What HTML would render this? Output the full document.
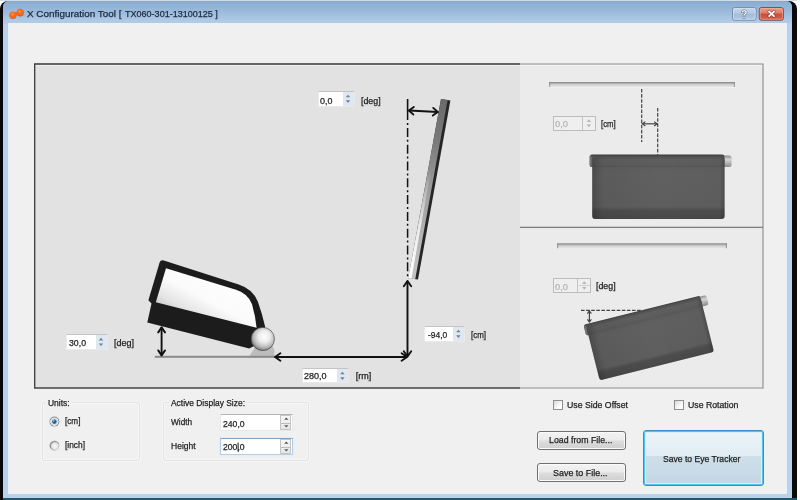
<!DOCTYPE html>
<html><head><meta charset="utf-8"><title>X Configuration Tool</title>
<style>
*{box-sizing:border-box;margin:0;padding:0}
html,body{width:800px;height:500px;overflow:hidden;background:#fff}
body{position:relative;font-family:"Liberation Sans",sans-serif;font-size:10px;color:#222}
.abs{position:absolute}
#dark{left:0;top:1px;width:797px;height:499px;background:#0a0a0c;border-radius:8px 8px 0 0}
#teal{left:3px;top:498px;width:794px;height:2px;background:#1d5a6e}
#frame{left:3px;top:1px;width:789px;height:497px;background:#b9d1ea;border-radius:6px 6px 0 0;overflow:hidden}
#titlebar{left:0;top:0;width:789px;height:24px;background:linear-gradient(#8da6c2 0,#8aadd2 1.4px,#8fb2d6 4px,#9ebcdc 50%,#adc9e5 80%,#b4cbe4 92%,#bccfe4 100%)}
#client{left:9px;top:24px;width:777px;height:468.5px;background:#f0f0f0;box-shadow:0 0 0 1px #eaf2f8}
#topstrip{left:0;top:0;width:797px;height:1.2px;background:#d2dde8}
.lbl{filter:blur(0.3px);-webkit-text-stroke:0.25px currentColor;position:absolute;white-space:nowrap;line-height:12px;transform-origin:0 0}
.spin{position:absolute;background:#fff;border:1px solid #e9e9e9;border-top-color:#c4c4c4}
.spin i{position:absolute;right:0;top:0;bottom:0;width:11px;background:#dfe7f1}
.spin.dis{background:#efefef;border:1px solid #bcbcbc}
.spin.dis i{background:#efefef;border-left:1px solid #c4c4c4}
.spin.big{border:1px solid #e9e9e9;border-top-color:#b4b4b4}
.spin.big i{width:11.5px;background:linear-gradient(#f6f6f6,#e6e6e6);border:1px solid #c4c4c4;top:0;bottom:0;right:0.5px}
.spin.big i:after{content:"";position:absolute;left:0;right:0;top:7px;height:1px;background:#bdbdbd}
.spin.foc{border:1px solid #b0d0ec;border-top-color:#7fa3c4;box-shadow:0 0 0 1px #e2eef9}
.btn.bigb{border:1px solid #3c8fc4;border-radius:3px;background:linear-gradient(#edf4f8,#e0ecf3 46%,#cfdfe9 47%,#c2d7e4);box-shadow:inset 0 0 0 1px #4cc4ee,inset 0 0 0 2px #d8eef8}
.gb{position:absolute;border:1px solid #e1e1e1;border-radius:3px;box-shadow:inset 0 0 0 1px #f7f7f7,0 0 0 1px #f6f6f6}
.btn,.cb,.spin,.gb{filter:blur(0.3px)}
.btn{position:absolute;border:1px solid #707070;border-radius:3px;background:linear-gradient(#f3f3f3,#ebebeb 48%,#dddddd 52%,#cfcfcf);box-shadow:inset 0 0 0 1px #fafafa}
.cb{position:absolute;width:10px;height:10px;border:1px solid #8e8f8f;background:linear-gradient(135deg,#d8d8d8,#fff 70%)}
</style></head><body>
<div class="abs" id="topstrip"></div>
<div class="abs" id="dark"></div>
<div class="abs" id="teal"></div>
<div class="abs" id="frame"><div class="abs" id="titlebar"></div></div>
<div class="abs" id="client"></div>
<svg class="abs" style="left:0;top:0;filter:blur(0.35px)" width="800" height="26" viewBox="0 0 800 26">
<defs>
<linearGradient id="gclose" x1="0" y1="0" x2="0" y2="1"><stop offset="0" stop-color="#e9a08e"/><stop offset="0.45" stop-color="#dc7a64"/><stop offset="0.5" stop-color="#cd4a33"/><stop offset="1" stop-color="#d4694f"/></linearGradient>
<linearGradient id="ghelp" x1="0" y1="0" x2="0" y2="1"><stop offset="0" stop-color="#c4d6ea"/><stop offset="0.45" stop-color="#b4cae3"/><stop offset="0.5" stop-color="#a2bcd9"/><stop offset="1" stop-color="#b4cbe4"/></linearGradient>
</defs>
<!-- app icon -->
<g fill="#a8481a" opacity="0.75"><circle cx="13" cy="15.6" r="3.5"/><circle cx="20.3" cy="12.9" r="3.5"/></g>
<g fill="#f26a20">
 <circle cx="12.9" cy="14.9" r="3.4"/><circle cx="20.2" cy="12.2" r="3.4"/>
 <path d="M13 13 L19 10.8 L20.5 14.4 L14.5 16.6Z"/>
</g>
<circle cx="12.4" cy="14" r="1.5" fill="#ff9246" opacity="0.8"/><circle cx="19.8" cy="11.3" r="1.5" fill="#ff9246" opacity="0.8"/>
<!-- help / close -->
<rect x="732.5" y="7.6" width="23.6" height="12.6" rx="2" fill="url(#ghelp)" stroke="#6d85a4" stroke-width="0.9"/>
<rect x="733.4" y="8.5" width="21.8" height="10.8" rx="1.4" fill="none" stroke="#e4edf7" stroke-width="0.7" opacity="0.8"/>
<rect x="759.3" y="7.6" width="24" height="12.6" rx="2" fill="url(#gclose)" stroke="#7a3a3a" stroke-width="0.9"/>
<rect x="760.2" y="8.5" width="22.2" height="10.8" rx="1.4" fill="none" stroke="#f3c0b4" stroke-width="0.7" opacity="0.8"/>
<g stroke="#5a2a2a" stroke-width="3.1" stroke-linecap="square" opacity="0.55"><path d="M769.2 11.7 L774 16.1 M774 11.7 L769.2 16.1"/></g>
<g stroke="#fff" stroke-width="1.8" stroke-linecap="square"><path d="M769.2 11.7 L774 16.1 M774 11.7 L769.2 16.1"/></g>
<text x="744.3" y="17.8" font-family="Liberation Sans, sans-serif" font-weight="bold" font-size="10.5" text-anchor="middle" fill="#eef3f9" stroke="#4f6482" stroke-width="1" paint-order="stroke">?</text>
</svg>

<svg class="abs" style="left:0;top:0;filter:blur(0.35px)" width="800" height="500" viewBox="0 0 800 500">
<defs>
<linearGradient id="gwin" x1="0.8" y1="0.05" x2="0.12" y2="0.8"><stop offset="0" stop-color="#ffffff"/><stop offset="0.55" stop-color="#fbfbfb"/><stop offset="0.8" stop-color="#e4e4e4"/><stop offset="1" stop-color="#bcbcbc"/></linearGradient>
<radialGradient id="gball" cx="0.56" cy="0.4" r="0.62"><stop offset="0" stop-color="#ffffff"/><stop offset="0.4" stop-color="#ececec"/><stop offset="0.75" stop-color="#b8b8b8"/><stop offset="1" stop-color="#6e6e6e"/></radialGradient>
<linearGradient id="gmon" x1="0" y1="0" x2="1" y2="0"><stop offset="0" stop-color="#ffffff"/><stop offset="0.35" stop-color="#d8d8d8"/><stop offset="0.7" stop-color="#9a9a9a"/><stop offset="0.8" stop-color="#222"/><stop offset="1" stop-color="#111"/></linearGradient>
<linearGradient id="gmonfade" x1="0" y1="0" x2="0" y2="1"><stop offset="0" stop-color="#5a5a5a" stop-opacity="1"/><stop offset="0.35" stop-color="#6c6c6c" stop-opacity="0.85"/><stop offset="0.75" stop-color="#8a8a8a" stop-opacity="0.15"/><stop offset="1" stop-color="#8a8a8a" stop-opacity="0"/></linearGradient>
<linearGradient id="gbar" x1="0" y1="0" x2="0" y2="1"><stop offset="0" stop-color="#858585"/><stop offset="0.22" stop-color="#a8a8a8"/><stop offset="0.45" stop-color="#d2d2d2"/><stop offset="0.8" stop-color="#e2e2e2"/><stop offset="1" stop-color="#f6f6f6"/></linearGradient>
<linearGradient id="groll" x1="0" y1="0" x2="0" y2="1"><stop offset="0" stop-color="#3c3c3c"/><stop offset="0.14" stop-color="#4e4e4e"/><stop offset="0.4" stop-color="#5f5f5f"/><stop offset="0.85" stop-color="#5c5c5c"/><stop offset="1" stop-color="#565656"/></linearGradient>
<linearGradient id="gknob" x1="0" y1="0" x2="0" y2="1"><stop offset="0" stop-color="#909090"/><stop offset="0.35" stop-color="#d4d4d4"/><stop offset="1" stop-color="#8a8a8a"/></linearGradient>
<linearGradient id="gbody" x1="0" y1="0" x2="0" y2="1"><stop offset="0" stop-color="#5a5a5a"/><stop offset="0.25" stop-color="#606060"/><stop offset="0.8" stop-color="#5e5e5e"/><stop offset="0.86" stop-color="#4e4e4e"/><stop offset="1" stop-color="#484848"/></linearGradient><linearGradient id="gside" x1="0" y1="0" x2="1" y2="0"><stop offset="0" stop-color="#000" stop-opacity="0.22"/><stop offset="0.08" stop-color="#000" stop-opacity="0.05"/><stop offset="0.5" stop-color="#000" stop-opacity="0"/><stop offset="0.96" stop-color="#000" stop-opacity="0.02"/><stop offset="1" stop-color="#000" stop-opacity="0.2"/></linearGradient>
<linearGradient id="gmonv" gradientUnits="userSpaceOnUse" x1="0" y1="99" x2="0" y2="279"><stop offset="0" stop-color="#6a6a6a"/><stop offset="0.25" stop-color="#7c7c7c"/><stop offset="0.5" stop-color="#9c9c9c"/><stop offset="0.75" stop-color="#b4b4b4"/><stop offset="1" stop-color="#c4c4c4"/></linearGradient><linearGradient id="gmonhl" gradientUnits="userSpaceOnUse" x1="0" y1="170" x2="0" y2="279"><stop offset="0" stop-color="#fff" stop-opacity="0"/><stop offset="0.5" stop-color="#fff" stop-opacity="0.7"/><stop offset="1" stop-color="#fff" stop-opacity="1"/></linearGradient>
<g id="dev">
 <rect x="0" y="1" width="142" height="11.5" rx="2.5" fill="url(#gknob)"/>
 <rect x="2.6" y="3" width="132.4" height="61.5" rx="3" fill="url(#gbody)"/>
 <rect x="0" y="0" width="135" height="12.5" rx="2.5" fill="url(#groll)"/>
 <rect x="0.3" y="1" width="1.6" height="10.5" rx="0.8" fill="#8a8a8a" opacity="0.55"/>
 <rect x="2.6" y="3" width="132.4" height="61.5" rx="3" fill="url(#gside)"/>
</g>
</defs>
<!-- panel backgrounds -->
<rect x="34" y="63.5" width="486" height="324.5" fill="#e2e2e2"/>
<rect x="520" y="63.5" width="243.5" height="324.5" fill="#ebebeb"/>
<!-- light inner line under top border -->
<rect x="35" y="64.6" width="728" height="1.2" fill="#f6f6f6" opacity="0.9"/>
<!-- borders -->
<path d="M520 64 H34.7 V388" fill="none" stroke="#3a3a3a" stroke-width="1.3"/><path d="M34 388 H520" fill="none" stroke="#444" stroke-width="1.6"/>
<path d="M520 64 H763 V388 H520" fill="none" stroke="#8c8c8c" stroke-width="1.1"/>
<path d="M520 227.3 H763" stroke="#7c7c7c" stroke-width="1.2"/>

<!-- side-view eye tracker -->
<path d="M248.5 357.5 L254 349 L262 339 L272 344 L274.3 350 L274.3 357.5 Z" fill="#bcbcbc"/>
<rect x="154.7" y="355.8" width="120" height="2" fill="#8a8a8a"/>
<path d="M159.6 262.6 Q160.6 259.4 163.8 260.4 L238.7 284.4 Q253 289 257.8 301.5 Q262 313 265.2 327 L256 345 L249.2 348.6 L147.3 322.4 L151.5 303.5 L148.4 300.3 Z" fill="#1c1c1c"/>
<path d="M166 268.2 L236 289.8 Q248 293.6 252 304.2 Q255.2 315 256.6 327.7 L155.8 302.2 Z" fill="url(#gwin)"/>
<circle cx="262.8" cy="339" r="11.6" fill="url(#gball)" stroke="#4a4a4a" stroke-width="0.7"/>

<!-- monitor -->
<path d="M441 99 L450.4 100.4 L418 279.6 L408.3 278.3 Z" fill="#262626"/>
<path d="M441 99 L447.6 100 L415.2 279.2 L408.3 278.3 Z" fill="url(#gmonv)"/>
<path d="M428.4 170 L431 170.4 L411.4 278.8 L408.3 278.3 Z" fill="url(#gmonhl)"/>

<!-- dash-dot line -->
<path d="M407.6 99 V111.5" stroke="#111" stroke-width="1.6"/>
<path d="M407.6 111.1 V278.5" stroke="#111" stroke-width="1.5" stroke-dasharray="9 2.9 2 2.9"/>

<!-- arrows -->
<g stroke="#111" stroke-width="1.9" fill="none" stroke-linecap="round" stroke-linejoin="round">
 <path d="M409.2 110.5 L437.6 112"/><path d="M413.8 106.9 L409 110.5 L413.4 114.6"/><path d="M433.2 107.9 L437.8 112 L432.8 115.6"/>
 <path d="M161.6 327.8 V355"/><path d="M158.2 332.4 L161.6 327.4 L165 332.4"/><path d="M158.2 350.4 L161.6 355.4 L165 350.4"/>
 <path d="M275.5 357 H406.5"/><path d="M280.4 353.2 L275 357 L280.4 360.8"/><path d="M401.6 353.2 L407 357 L401.6 360.8"/>
 <path d="M407.5 281.4 V356"/><path d="M403.8 286.2 L407.5 281 L411.2 286.2"/><path d="M403.8 351.2 L407.5 356.4 L411.2 351.2"/>
</g>

<!-- right top panel -->
<rect x="549" y="82" width="186" height="5.8" fill="url(#gbar)"/><rect x="549" y="82" width="1.2" height="5" fill="#8a8a8a" opacity="0.7"/><rect x="733.8" y="82" width="1.2" height="5" fill="#8a8a8a" opacity="0.7"/>
<g stroke="#444" stroke-width="1.2" fill="none">
 <path d="M641.7 89 V142" stroke-dasharray="3.6 1.5"/>
 <path d="M657.7 108 V155" stroke-dasharray="3.6 1.5"/>
 <path d="M642.5 123.8 H657"/><path d="M645.3 121.6 L642.5 123.8 L645.3 126"/><path d="M654.2 121.6 L657 123.8 L654.2 126"/>
</g>
<use href="#dev" x="589.6" y="154.6"/>

<!-- right bottom panel -->
<rect x="557" y="243.3" width="170" height="5.8" fill="url(#gbar)"/><rect x="557" y="243.3" width="1.2" height="5" fill="#8a8a8a" opacity="0.7"/><rect x="725.8" y="243.3" width="1.2" height="5" fill="#8a8a8a" opacity="0.7"/>
<g stroke="#444" stroke-width="1.2" fill="none">
 <path d="M581 310.4 H641" stroke-dasharray="3.6 1.5"/>
 <path d="M589.4 311 V322"/><path d="M587.4 313.6 L589.4 311 L591.4 313.6"/><path d="M587.4 319.4 L589.4 322 L591.4 319.4"/>
</g>
<g transform="translate(583.4 324.7) rotate(-14) scale(0.89 0.9)"><use href="#dev" x="0" y="0"/></g>
</svg>

<!-- spinboxes (x,y,w,h) -->
<div class="spin" style="left:317.5px;top:91px;width:37px;height:15.5px"><i></i></div>
<div class="spin" style="left:66px;top:334px;width:41.5px;height:15.5px"><i></i></div>
<div class="spin" style="left:423.5px;top:326px;width:41px;height:15.5px"><i></i></div>
<div class="spin" style="left:302px;top:368px;width:46.5px;height:15px"><i></i></div>
<div class="spin dis" style="left:552.5px;top:115.6px;width:43px;height:15px"><i style="width:12.5px"></i></div>
<div class="spin dis" style="left:552.5px;top:277.7px;width:38.3px;height:15.4px"><i style="width:12.5px"></i></div>
<div class="spin big" style="left:220px;top:414px;width:72.6px;height:17px"><i></i></div>
<div class="spin big foc" style="left:220px;top:438px;width:72.6px;height:17px"><i></i></div>
<!-- spin arrows -->
<svg class="abs" style="left:0;top:0;filter:blur(0.3px)" width="800" height="500" viewBox="0 0 800 500">
<g fill="#6f7f9c">
 <path d="M345.8 97.3 l2.2 -2.6 l2.2 2.6z M345.8 100.3 l2.2 2.6 l2.2 -2.6z"/>
 <path d="M98.8 340.4 l2.2 -2.6 l2.2 2.6z M98.8 343.4 l2.2 2.6 l2.2 -2.6z"/>
 <path d="M456.2 332.3 l2.2 -2.6 l2.2 2.6z M456.2 335.3 l2.2 2.6 l2.2 -2.6z"/>
 <path d="M340.2 374.3 l2.2 -2.6 l2.2 2.6z M340.2 377.3 l2.2 2.6 l2.2 -2.6z"/>
</g>
<g fill="#b8b8b8">
 <path d="M586.6 122 l2.3 -2.7 l2.3 2.7z M586.6 124.6 l2.3 2.7 l2.3 -2.7z"/>
 <path d="M582 284 l2.3 -2.7 l2.3 2.7z M582 287 l2.3 2.7 l2.3 -2.7z"/>
</g>
<path d="M578.6 285.5 H590" stroke="#c8c8c8" stroke-width="0.8"/>
<g fill="#555">
 <path d="M284.2 419.8 l2.1 -2.4 l2.1 2.4z M284.2 425.2 l2.1 2.4 l2.1 -2.4z"/>
 <path d="M284.2 443.8 l2.1 -2.4 l2.1 2.4z M284.2 449.2 l2.1 2.4 l2.1 -2.4z"/>
</g>
<!-- text caret -->
<path d="M238.1 442.6 V451.8" stroke="#111" stroke-width="1"/>
<!-- radios -->
<defs>
<radialGradient id="rad1" cx="0.5" cy="0.5" r="0.5"><stop offset="0" stop-color="#1d4f7a"/><stop offset="0.38" stop-color="#2a6aa0"/><stop offset="0.5" stop-color="#c6dcec"/><stop offset="0.78" stop-color="#e8eef2"/><stop offset="0.86" stop-color="#8e8f8f"/><stop offset="1" stop-color="#9a9a9a"/></radialGradient>
<radialGradient id="rad0" cx="0.55" cy="0.55" r="0.5"><stop offset="0" stop-color="#fafafa"/><stop offset="0.6" stop-color="#e6e6e6"/><stop offset="0.8" stop-color="#c8c8c8"/><stop offset="0.9" stop-color="#8e8e8e"/><stop offset="1" stop-color="#a0a0a0"/></radialGradient>
</defs>
<circle cx="54.4" cy="421.6" r="5" fill="url(#rad1)"/>
<circle cx="53.7" cy="420.8" r="0.9" fill="#cfe6f6" opacity="0.8"/>
<circle cx="54.4" cy="445.6" r="4.9" fill="url(#rad0)"/>
</svg>
<!-- group boxes -->
<div class="gb" style="left:42.4px;top:402.4px;width:97.4px;height:58.2px"></div>
<div class="gb" style="left:163.4px;top:402.4px;width:146px;height:58.2px"></div>
<div class="abs" style="left:46px;top:398px;width:26px;height:10px;background:#f0f0f0"></div>
<div class="abs" style="left:169px;top:398px;width:78px;height:10px;background:#f0f0f0"></div>
<!-- checkboxes -->
<div class="cb" style="left:553px;top:400px"></div>
<div class="cb" style="left:674.4px;top:400px"></div>
<!-- buttons -->
<div class="btn" style="left:537.4px;top:431px;width:88.2px;height:19px"></div>
<div class="btn" style="left:537.4px;top:463px;width:88.2px;height:19.4px"></div>
<div class="btn bigb" style="left:643px;top:430.4px;width:121px;height:55.8px"></div>

<div class="lbl" id="title" style="left:26.7px;top:8.0px;font-size:9.6px;transform:scaleX(1.032);color:#1c2a3e">X Configuration Tool [</div>
<div class="lbl" id="title2" style="left:125.3px;top:8.0px;font-size:9.6px;transform:scaleX(0.941);color:#1c2a3e">TX060-301-13100125 ]</div>
<div class="lbl" id="s1" style="left:320.3px;top:94.5px;font-size:9px;transform:scaleX(0.991);color:#222">0,0</div>
<div class="lbl" id="l1" style="left:360.7px;top:94.5px;font-size:9px;transform:scaleX(0.978);color:#222">[deg]</div>
<div class="lbl" id="s2" style="left:68.7px;top:337.2px;font-size:9px;transform:scaleX(0.970);color:#222">30,0</div>
<div class="lbl" id="l2" style="left:113.7px;top:337.2px;font-size:9px;transform:scaleX(0.998);color:#222">[deg]</div>
<div class="lbl" id="s3" style="left:427.7px;top:329.2px;font-size:9px;transform:scaleX(0.938);color:#222">-94,0</div>
<div class="lbl" id="l3" style="left:470.7px;top:329.2px;font-size:9px;transform:scaleX(0.882);color:#222">[cm]</div>
<div class="lbl" id="s4" style="left:304.1px;top:369.8px;font-size:9px;transform:scaleX(1.003);color:#222">280,0</div>
<div class="lbl" id="l4" style="left:355.7px;top:369.8px;font-size:9px;transform:scaleX(1.000);color:#222">[rm]</div>
<div class="lbl" id="s5" style="left:555.3px;top:118.2px;font-size:9px;transform:scaleX(1.031);color:#b4b4b4">0,0</div>
<div class="lbl" id="l5" style="left:601.0px;top:118.4px;font-size:9px;transform:scaleX(0.868);color:#222">[cm]</div>
<div class="lbl" id="s6" style="left:555.3px;top:280.5px;font-size:9px;transform:scaleX(1.031);color:#b4b4b4">0,0</div>
<div class="lbl" id="l6" style="left:595.7px;top:280.3px;font-size:9px;transform:scaleX(0.978);color:#222">[deg]</div>
<div class="lbl" id="g1" style="left:48.1px;top:396.6px;font-size:9px;transform:scaleX(0.938);color:#222">Units:</div>
<div class="lbl" id="r1" style="left:65.3px;top:415.4px;font-size:9px;transform:scaleX(0.906);color:#222">[cm]</div>
<div class="lbl" id="r2" style="left:65.3px;top:439.4px;font-size:9px;transform:scaleX(0.930);color:#222">[inch]</div>
<div class="lbl" id="g2" style="left:170.7px;top:396.6px;font-size:9px;transform:scaleX(0.936);color:#222">Active Display Size:</div>
<div class="lbl" id="w" style="left:171.1px;top:416.0px;font-size:9px;transform:scaleX(0.921);color:#222">Width</div>
<div class="lbl" id="h" style="left:171.1px;top:440.0px;font-size:9px;transform:scaleX(0.946);color:#222">Height</div>
<div class="lbl" id="s7" style="left:223.1px;top:418.0px;font-size:9px;transform:scaleX(0.959);color:#222">240,0</div>
<div class="lbl" id="s8" style="left:223.1px;top:441.0px;font-size:9px;transform:scaleX(0.959);color:#222">200,0</div>
<div class="lbl" id="c1" style="left:566.7px;top:399.0px;font-size:9px;transform:scaleX(0.970);color:#222">Use Side Offset</div>
<div class="lbl" id="c2" style="left:688.3px;top:399.0px;font-size:9px;transform:scaleX(0.969);color:#222">Use Rotation</div>
<div class="lbl" id="b1" style="left:548.7px;top:434.0px;font-size:9px;transform:scaleX(0.975);color:#222">Load from File...</div>
<div class="lbl" id="b2" style="left:552.7px;top:467.0px;font-size:9px;transform:scaleX(0.992);color:#222">Save to File...</div>
<div class="lbl" id="b3" style="left:662.7px;top:453.0px;font-size:9px;transform:scaleX(0.955);color:#222">Save to Eye Tracker</div>

</body></html>
